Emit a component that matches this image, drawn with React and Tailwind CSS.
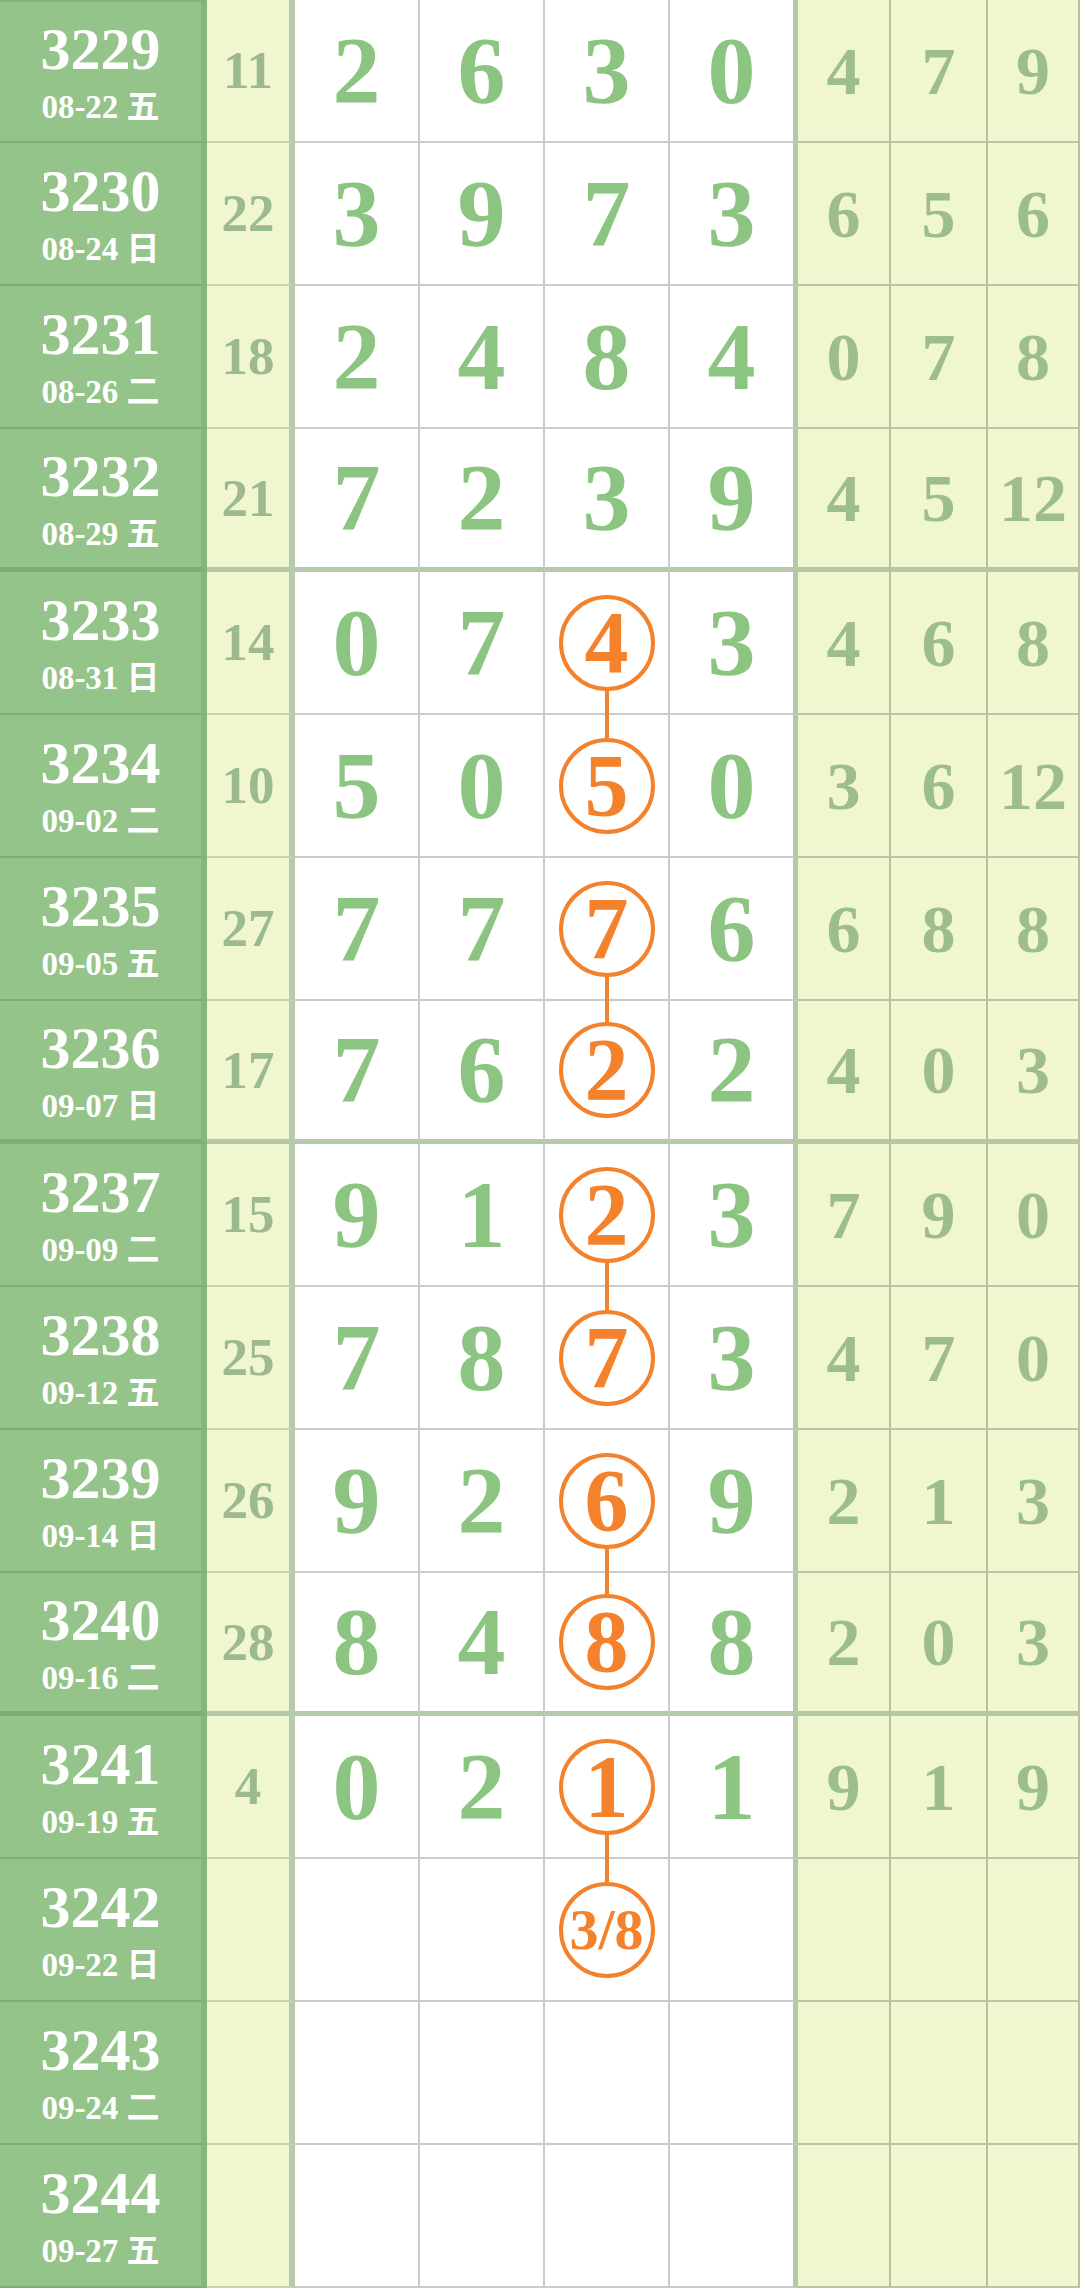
import React from 'react';

const rows = [
  { no: 3229, date: '08-22 五', sum: 11, main: [2, 6, 3, 0], tail: [4, 7, 9] },
  { no: 3230, date: '08-24 日', sum: 22, main: [3, 9, 7, 3], tail: [6, 5, 6] },
  { no: 3231, date: '08-26 二', sum: 18, main: [2, 4, 8, 4], tail: [0, 7, 8] },
  { no: 3232, date: '08-29 五', sum: 21, main: [7, 2, 3, 9], tail: [4, 5, 12] },
  { no: 3233, date: '08-31 日', sum: 14, main: [0, 7, 4, 3], tail: [4, 6, 8], hit: true, link: true },
  { no: 3234, date: '09-02 二', sum: 10, main: [5, 0, 5, 0], tail: [3, 6, 12], hit: true },
  { no: 3235, date: '09-05 五', sum: 27, main: [7, 7, 7, 6], tail: [6, 8, 8], hit: true, link: true },
  { no: 3236, date: '09-07 日', sum: 17, main: [7, 6, 2, 2], tail: [4, 0, 3], hit: true },
  { no: 3237, date: '09-09 二', sum: 15, main: [9, 1, 2, 3], tail: [7, 9, 0], hit: true, link: true },
  { no: 3238, date: '09-12 五', sum: 25, main: [7, 8, 7, 3], tail: [4, 7, 0], hit: true },
  { no: 3239, date: '09-14 日', sum: 26, main: [9, 2, 6, 9], tail: [2, 1, 3], hit: true, link: true },
  { no: 3240, date: '09-16 二', sum: 28, main: [8, 4, 8, 8], tail: [2, 0, 3], hit: true },
  { no: 3241, date: '09-19 五', sum: 4, main: [0, 2, 1, 1], tail: [9, 1, 9], hit: true, link: true },
  { no: 3242, date: '09-22 日', sum: '', main: ['', '', '3/8', ''], tail: ['', '', ''], hit: true, guess: true },
  { no: 3243, date: '09-24 二', sum: '', main: ['', '', '', ''], tail: ['', '', ''] },
  { no: 3244, date: '09-27 五', sum: '', main: ['', '', '', ''], tail: ['', '', ''] },
];

const mainW = ['w-[125px]', 'w-[125px]', 'w-[125px]', 'w-[128px]'];
const tailW = ['w-[93px]', 'w-[97px]', 'w-[92px]'];

function Circle({ value, small }) {
  return (
    <div className="w-[96px] h-[96px] rounded-full border-4 border-[#f4812c] bg-white flex items-center justify-center">
      <span className={small ? 'text-[#f4812c] font-bold text-[58px] leading-none' : 'text-[#f4812c] font-bold text-[88px] leading-none'}>
        {value}
      </span>
    </div>
  );
}

function Row({ r, i }) {
  const group = i % 4 === 3 && i < 15;
  const b = group ? 'border-b-[5px]' : 'border-b-2';

  return (
    <div className="flex h-[143px]">
      <div className={`w-[207px] shrink-0 bg-[#94c48a] border-r-[6px] border-r-[#86b67c] border-b-[#7fae75] ${b} ${i === 0 ? 'border-t-2 border-t-[#82b278]' : ''} flex flex-col items-center justify-center text-white font-bold`}>
        <div className="text-[60px] leading-none">{r.no}</div>
        <div className="text-[33px] leading-none mt-3">{r.date}</div>
      </div>
      <div className={`w-[88px] shrink-0 bg-[#f0f7d0] border-r-[6px] border-r-[#b6cab0] ${group ? 'border-b-[#b5c9a6]' : 'border-b-[#c9d2ad]'} ${b} flex items-center justify-center text-[#9cba8e] font-bold text-[53px] leading-none`}>
        {r.sum}
      </div>
      {r.main.map((v, j) => {
        const last = j === 3;
        const hit = r.hit && j === 2;
        return (
          <div
            key={j}
            className={`${mainW[j]} shrink-0 relative bg-white ${last ? 'border-r-[5px] border-r-[#b3c9a6]' : 'border-r-2 border-r-[#cbcbcb]'} ${group ? 'border-b-[#b5caa8]' : 'border-b-[#cbcbcb]'} ${b} flex items-center justify-center text-[#8cc481] font-bold text-[96px] leading-none`}
          >
            {hit ? <Circle value={v} small={r.guess} /> : v}
            {hit && r.link && (
              <div className="absolute left-1/2 -translate-x-1/2 top-[116px] w-1 h-[50px] bg-[#f4812c] z-10" />
            )}
          </div>
        );
      })}
      {r.tail.map((v, j) => (
        <div
          key={j}
          className={`${tailW[j]} shrink-0 bg-[#f0f7d0] border-r-2 border-r-[#b5c29c] ${group ? 'border-b-[#b3c8a3]' : 'border-b-[#b9c4a0]'} ${b} flex items-center justify-center text-[#9dbd8f] font-bold text-[68px] leading-none`}
        >
          {v}
        </div>
      ))}
    </div>
  );
}

export default function App() {
  return (
    <div className="w-[1080px] h-[2289px] overflow-hidden bg-white font-[family-name:Liberation_Serif,Noto_Sans_CJK_SC,serif]">
      {rows.map((r, i) => (
        <Row key={r.no} r={r} i={i} />
      ))}
    </div>
  );
}
